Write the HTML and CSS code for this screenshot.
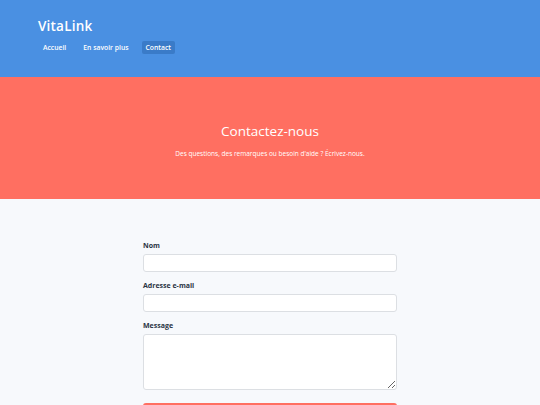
FILE: index.html
```html
<!DOCTYPE html>
<html lang="fr">
<head>
<meta charset="utf-8">
<title>VitaLink - Contact</title>
<link rel="stylesheet" href="styles.css">
</head>
<body>
<header class="site-header">
  <div class="brand">VitaLink</div>
  <nav class="nav">
    <a class="nav-link" href="#">Accueil</a>
    <a class="nav-link" href="#">En savoir plus</a>
    <a class="nav-link active" href="#">Contact</a>
  </nav>
</header>
<section class="hero">
  <h1 class="hero-title">Contactez-nous</h1>
  <p class="hero-text">Des questions, des remarques ou besoin d'aide ? Écrivez-nous.</p>
</section>
<main class="content">
  <form class="contact-form">
    <label class="field-label" for="nom">Nom</label>
    <input class="field-input" id="nom" type="text">
    <label class="field-label" for="email">Adresse e-mail</label>
    <input class="field-input" id="email" type="email">
    <label class="field-label" for="msg">Message</label>
    <textarea class="field-area" id="msg"></textarea>
    <button class="submit" type="button">Envoyer</button>
  </form>
</main>
</body>
</html>
```
FILE: styles.css
```css
* { box-sizing: border-box; }
html, body { margin: 0; padding: 0; }
body {
  font-family: "Open Sans", "Liberation Sans", sans-serif;
  background: #f7f9fc;
  color: #2c3e50;
}
.site-header {
  background: #4a90e2;
  height: 77px;
  padding: 18px 38px 0;
}
.brand {
  color: #fff;
  font-size: 13.5px;
  font-weight: 600;
  line-height: 16px;
  letter-spacing: 0.2px;
}
.nav {
  display: flex;
  gap: 9px;
  margin-top: 7px;
  margin-left: 1px;
}
.nav-link {
  color: #fff;
  text-decoration: none;
  font-size: 6.8px;
  font-weight: 600;
  line-height: 13px;
  padding: 0 4px;
  border-radius: 2px;
}
.nav-link.active { background: #3a7bc8; }
.hero {
  background: #ff6f61;
  height: 122px;
  padding-top: 44px;
  text-align: center;
  color: #fff;
}
.hero-title {
  margin: 0;
  font-size: 13.5px;
  font-weight: 500;
  line-height: 20px;
}
.hero-text {
  margin: 8px 0 0;
  font-size: 6.5px;
  line-height: 10px;
}
.content {
  padding-top: 42px;
}
.contact-form {
  width: 254px;
  margin-left: 143px;
  display: flex;
  flex-direction: column;
}
.field-label {
  font-size: 7px;
  font-weight: 700;
  line-height: 10px;
  color: #2a3444;
  margin-bottom: 3px;
}
.field-input, .field-area {
  display: block;
  width: 100%;
  background: #fff;
  border: 1px solid #dcdfe3;
  border-radius: 3px;
  font: inherit;
  margin: 0 0 9px;
}
.field-input { height: 18px; }
.field-area { height: 56px; resize: vertical; margin-bottom: 13px; }
.submit {
  height: 20px;
  border: none;
  border-radius: 3px;
  background: #ff6f61;
  color: #fff;
  font: inherit;
  font-size: 7px;
}
```
